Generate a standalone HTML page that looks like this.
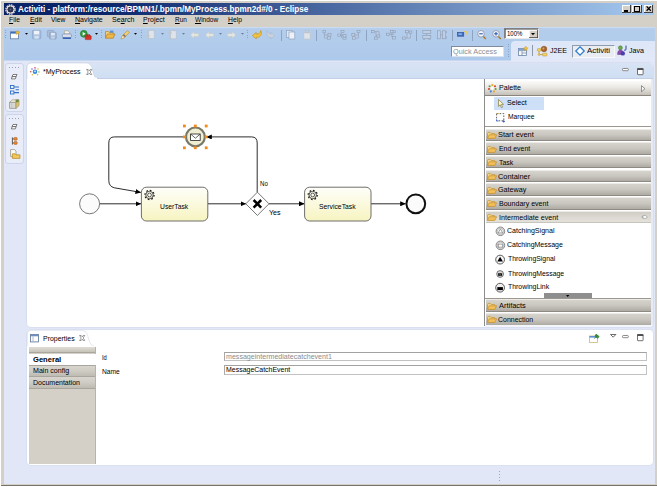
<!DOCTYPE html>
<html>
<head>
<meta charset="utf-8">
<title>Activiti - Eclipse</title>
<style>
html,body{margin:0;padding:0;}
body{width:657px;height:487px;position:relative;overflow:hidden;background:#fff;font-family:"Liberation Sans",sans-serif;font-size:8px;color:#000;}
.a{position:absolute;}
svg{position:absolute;overflow:visible;}
.t{position:absolute;white-space:nowrap;line-height:10px;height:10px;transform-origin:0 50%;}
u{text-decoration:underline;text-decoration-thickness:0.7px;text-underline-offset:0.6px;}
#win{left:1px;top:1px;width:656px;height:485px;background:#d4d0c8;border-bottom:1px solid #77746e;box-sizing:border-box;}
#title{left:4px;top:3.1px;width:650.3px;height:11.7px;background:linear-gradient(90deg,#0a246a 0%,#0a246a 15%,#a6caf0 100%);}
#menubar{left:4px;top:14.7px;width:650.8px;height:12.3px;background:#d4d0c8;}
#tool{left:4px;top:27px;width:650.8px;height:33.6px;background:linear-gradient(180deg,#d3e2f5 0,#b4cdec 1.6px,#adc9eb 100%);}
#work{left:4px;top:60.6px;width:650.8px;height:423.6px;background:#e2e7f7;}
.wb{position:absolute;top:4.7px;width:9.2px;height:8.6px;background:#d4d0c8;box-shadow:inset -1px -1px 0 #404040,inset 1px 1px 0 #fff;}
.drawer{position:absolute;left:485.5px;width:165.3px;height:12.6px;box-sizing:border-box;border-top:0.8px solid #ecebe7;border-bottom:0.9px solid #8f8b84;background:linear-gradient(180deg,#d6d3cc 0%,#c9c6bf 50%,#aeaba4 100%);}
.sep{position:absolute;width:1px;background:#8ea3c0;}
.dots{position:absolute;width:1px;height:10px;background:repeating-linear-gradient(180deg,#8ea3c0 0,#8ea3c0 1px,transparent 1px,transparent 2.4px);}
.fld{position:absolute;left:224px;width:423px;height:9.4px;background:#fff;box-sizing:border-box;border:1px solid #c2c2c2;border-top-color:#a2a2a2;border-left-color:#a8a8a8;}
</style>
</head>
<body>
<div id="win" class="a"></div>
<div id="title" class="a"></div>
<div id="menubar" class="a"></div>
<div id="tool" class="a"></div>
<div id="work" class="a"></div>
<svg style="left:5px;top:4px" width="11" height="11" viewBox="0 0 11 11">
<circle cx="5.5" cy="5.5" r="4.6" fill="#3a3f55" stroke="#e8e0e8" stroke-width="1.3" stroke-dasharray="1.6 0.8"/>
<circle cx="5.5" cy="5.5" r="3.6" fill="none" stroke="#f4f0f4" stroke-width="1"/>
<circle cx="5.5" cy="5.5" r="2.6" fill="#2a3048"/>
<circle cx="5.5" cy="5.5" r="1" fill="#566090"/>
</svg>
<div class="t" id="t0" style="left:17.60px;top:3.89px;font-size:8.40px;color:#fff;font-weight:bold;transform:scaleX(0.9734);">Activiti - platform:/resource/BPMN1/.bpmn/MyProcess.bpmn2d#/0 - Eclipse</div>
<div class="wb" style="left:622.2px;"></div>
<div class="a" style="left:624.4px;top:10.4px;width:4px;height:1.3px;background:#000;"></div>
<div class="wb" style="left:632.4px;"></div>
<div class="a" style="left:634.2px;top:6.2px;width:5.6px;height:5.4px;border:0.7px solid #000;border-top-width:1.5px;box-sizing:border-box;"></div>
<div class="wb" style="left:643.6px;"></div>
<svg style="left:645.6px;top:6.4px" width="6" height="6" viewBox="0 0 6 6"><path d="M0.6 0.4 L4.8 4.8 M4.8 0.4 L0.6 4.8" stroke="#000" stroke-width="1.3"/></svg>
<div class="t" id="t1" style="left:8.90px;top:15.40px;font-size:7.80px;color:#000;transform:scaleX(0.8666);"><u>F</u>ile</div>
<div class="t" id="t2" style="left:29.70px;top:15.40px;font-size:7.80px;color:#000;transform:scaleX(0.8846);"><u>E</u>dit</div>
<div class="t" id="t3" style="left:51.00px;top:15.40px;font-size:7.80px;color:#000;transform:scaleX(0.8529);">View</div>
<div class="t" id="t4" style="left:75.20px;top:15.40px;font-size:7.80px;color:#000;transform:scaleX(0.9027);"><u>N</u>avigate</div>
<div class="t" id="t5" style="left:111.90px;top:15.40px;font-size:7.80px;color:#000;transform:scaleX(0.9097);">Se<u>a</u>rch</div>
<div class="t" id="t6" style="left:142.90px;top:15.40px;font-size:7.80px;color:#000;transform:scaleX(0.8978);"><u>P</u>roject</div>
<div class="t" id="t7" style="left:174.60px;top:15.40px;font-size:7.80px;color:#000;transform:scaleX(0.8236);"><u>R</u>un</div>
<div class="t" id="t8" style="left:195.30px;top:15.40px;font-size:7.80px;color:#000;transform:scaleX(0.8365);"><u>W</u>indow</div>
<div class="t" id="t9" style="left:228.00px;top:15.40px;font-size:7.80px;color:#000;transform:scaleX(0.8662);"><u>H</u>elp</div>
<div class="a" style="left:510.8px;top:40.8px;width:144px;height:20px;border-radius:4px 0 0 0;background:linear-gradient(180deg,#dde7f7,#e2e8f7);"></div>
<div class="a" style="left:4px;top:59.8px;width:507px;height:0.9px;background:#c6d8f0;"></div>
<div class="dots" style="left:5.2px;top:30.0px;height:10.0px"></div>
<svg style="left:10.40px;top:30.00px" width="10.00" height="9.50" viewBox="0 0 10 9.5"><rect x="0.5" y="1.8" width="8" height="7" fill="#fdfdfd" stroke="#6e86ad" stroke-width="0.9"/><rect x="0.5" y="1.8" width="8" height="1.8" fill="#3a6ec0"/><path d="M7.6 0 L8.4 1.6 L10 2 L8.6 3 L9 4.6 L7.6 3.7 L6.2 4.6 L6.6 3 L5.2 2 L6.8 1.6Z" fill="#f3c13a" stroke="#b88a1a" stroke-width="0.3"/></svg>
<svg style="left:24.60px;top:33.30px" width="3.00" height="2.00" viewBox="0 0 3 2"><path d="M0 0H3L1.5 1.8Z" fill="#000"/></svg>
<svg style="left:32.30px;top:30.00px" width="9.20" height="9.20" viewBox="0 0 9.2 9.2"><rect x="0.4" y="0.4" width="8.4" height="8.4" rx="0.8" fill="#a9c0e0" stroke="#8aa6cc" stroke-width="0.8"/><rect x="2" y="0.8" width="5.2" height="3.6" fill="#eef3fa"/><rect x="2.4" y="5.8" width="4.4" height="3" fill="#d3dfef"/></svg>
<svg style="left:47.40px;top:30.00px" width="9.60" height="9.40" viewBox="0 0 9.6 9.4"><rect x="0.4" y="0.4" width="6.4" height="6.4" rx="0.8" fill="#a9bdd8" stroke="#8ea4c4" stroke-width="0.7"/><rect x="2.6" y="2.4" width="6.6" height="6.6" rx="0.8" fill="#a5b9d6" stroke="#879fc2" stroke-width="0.7"/><rect x="4" y="2.8" width="3.8" height="2.6" fill="#e3eaf5"/><rect x="4.2" y="6.4" width="3.4" height="2.4" fill="#c6d3e6"/></svg>
<svg style="left:62.30px;top:30.00px" width="9.80" height="9.40" viewBox="0 0 9.8 9.4"><path d="M2.4 4 V0.8 H6 L7.4 2.2 V4Z" fill="#f6f4ea" stroke="#9a9484" stroke-width="0.6"/><rect x="0.4" y="4" width="9" height="3.6" rx="0.8" fill="#d9dfea" stroke="#7d8fae" stroke-width="0.7"/><rect x="0.8" y="7.4" width="8.2" height="1.6" fill="#3a62b4"/></svg>
<div class="dots" style="left:75.4px;top:30.0px;height:10.0px"></div>
<svg style="left:80.00px;top:29.60px" width="11.40" height="10.00" viewBox="0 0 11.4 10"><circle cx="3.8" cy="3.8" r="3.5" fill="#2f9a3c" stroke="#1f7a2c" stroke-width="0.5"/><path d="M2.7 1.9 L5.6 3.8 L2.7 5.7Z" fill="#fff"/><rect x="5.2" y="5.6" width="6" height="4" rx="0.7" fill="#d8322a" stroke="#a81e18" stroke-width="0.5"/><rect x="7" y="4.6" width="2.4" height="1.4" fill="none" stroke="#a81e18" stroke-width="0.6"/></svg>
<svg style="left:94.60px;top:33.30px" width="3.00" height="2.00" viewBox="0 0 3 2"><path d="M0 0H3L1.5 1.8Z" fill="#000"/></svg>
<div class="dots" style="left:100.5px;top:30.0px;height:10.0px"></div>
<svg style="left:105.00px;top:30.40px" width="10.40" height="8.80" viewBox="0 0 10.4 8.8"><path d="M0.5 8.2 V1.6 H3.4 L4.2 2.6 H8.2 V4" fill="#f5d485" stroke="#b8862a" stroke-width="0.8"/><path d="M0.5 8.2 L2.4 4 H10 L8.2 8.2Z" fill="#f0b849" stroke="#b8862a" stroke-width="0.8"/><rect x="4.8" y="0.6" width="3.6" height="2" fill="#5d8fd6"/></svg>
<svg style="left:120.00px;top:30.00px" width="10.00" height="9.60" viewBox="0 0 10 9.6"><path d="M1 9 L2.4 5.8 L7.4 0.6 L9.4 2.4 L4.4 7.6Z" fill="#f2cf72" stroke="#b58a2c" stroke-width="0.6"/><path d="M3.4 4.8 L5.4 6.6" stroke="#6a6a6a" stroke-width="1.4"/><path d="M1 9 L2.4 5.8 L4.4 7.6Z" fill="#fff6d8" stroke="#b58a2c" stroke-width="0.4"/></svg>
<svg style="left:134.30px;top:33.30px" width="3.00" height="2.00" viewBox="0 0 3 2"><path d="M0 0H3L1.5 1.8Z" fill="#000"/></svg>
<div class="dots" style="left:140.7px;top:30.0px;height:10.0px"></div>
<svg style="left:145.50px;top:30.00px" width="8.60" height="9.60" viewBox="0 0 8.6 9.6"><rect x="2.6" y="0.4" width="5.6" height="8" fill="#dfe4ea" stroke="#b7bec8" stroke-width="0.6"/><path d="M2 1 V7 M0.4 5.4 L2 7.4 L3.6 5.4" fill="none" stroke="#c2c6cc" stroke-width="1.1"/></svg>
<svg style="left:160.60px;top:33.30px" width="3.00" height="2.00" viewBox="0 0 3 2"><path d="M0 0H3L1.5 1.8Z" fill="#6b7c93"/></svg>
<svg style="left:167.80px;top:30.00px" width="8.60" height="9.60" viewBox="0 0 8.6 9.6"><rect x="2.6" y="0.8" width="5.6" height="8" fill="#dfe4ea" stroke="#b7bec8" stroke-width="0.6"/><path d="M2 8 V2 M0.4 3.6 L2 1.6 L3.6 3.6" fill="none" stroke="#c2c6cc" stroke-width="1.1"/></svg>
<svg style="left:182.40px;top:33.30px" width="3.00" height="2.00" viewBox="0 0 3 2"><path d="M0 0H3L1.5 1.8Z" fill="#6b7c93"/></svg>
<svg style="left:189.60px;top:30.80px" width="9.20" height="8.00" viewBox="0 0 9.2 8"><path d="M0.4 4 L4 0.6 V2.6 H8.8 V5.4 H4 V7.4Z" fill="#e4e6e4" stroke="#c4c7c2" stroke-width="0.6"/></svg>
<svg style="left:204.70px;top:30.80px" width="9.20" height="8.00" viewBox="0 0 9.2 8"><path d="M0.4 4 L4 0.6 V2.6 H8.8 V5.4 H4 V7.4Z" fill="#e4e6e4" stroke="#c4c7c2" stroke-width="0.6"/></svg>
<svg style="left:219.30px;top:33.30px" width="3.00" height="2.00" viewBox="0 0 3 2"><path d="M0 0H3L1.5 1.8Z" fill="#6b7c93"/></svg>
<svg style="left:226.80px;top:30.80px" width="9.20" height="8.00" viewBox="0 0 9.2 8"><g transform="translate(9.2,0) scale(-1,1)"><path d="M0.4 4 L4 0.6 V2.6 H8.8 V5.4 H4 V7.4Z" fill="#e4e6e4" stroke="#c4c7c2" stroke-width="0.6"/></g></svg>
<svg style="left:241.00px;top:33.30px" width="3.00" height="2.00" viewBox="0 0 3 2"><path d="M0 0H3L1.5 1.8Z" fill="#6b7c93"/></svg>
<div class="dots" style="left:246.6px;top:30.0px;height:10.0px"></div>
<svg style="left:251.60px;top:30.00px" width="10.20" height="9.40" viewBox="0 0 10.2 9.4"><path d="M0.4 5.6 L4.2 2.4 V4.2 C7 4.2 8.4 3 8.8 0.6 C10.6 4.4 8.4 7.6 4.2 7.4 V9Z" fill="#f2c23c" stroke="#c08e1c" stroke-width="0.6"/></svg>
<svg style="left:266.20px;top:30.00px" width="8.60" height="9.40" viewBox="0 0 8.6 9.4"><g transform="translate(8.6,0) scale(-0.84,1)"><path d="M0.4 5.6 L4.2 2.4 V4.2 C7 4.2 8.4 3 8.8 0.6 C10.6 4.4 8.4 7.6 4.2 7.4 V9Z" fill="#ccd3dc" stroke="#aab4c2" stroke-width="0.6"/></g></svg>
<div class="sep" style="left:281.0px;top:29.5px;height:11.0px"></div>
<svg style="left:286.30px;top:30.00px" width="9.40" height="9.60" viewBox="0 0 9.4 9.6"><rect x="0.4" y="0.4" width="5.8" height="7" fill="#dfe7f1" stroke="#8fa4c2" stroke-width="0.7"/><rect x="3" y="2" width="5.8" height="7" fill="#eef2f8" stroke="#8fa4c2" stroke-width="0.7"/></svg>
<svg style="left:302.50px;top:30.00px" width="8.20" height="9.60" viewBox="0 0 8.2 9.6"><rect x="0.6" y="2.4" width="7" height="6.8" fill="#d5dbe3" stroke="#bcc4cf" stroke-width="0.6"/><rect x="2.4" y="0.6" width="3.4" height="2.2" fill="#c9d0da" stroke="#b2bbc8" stroke-width="0.5"/><path d="M3 4 V8 M5.2 4 V8" stroke="#eef1f5" stroke-width="0.9"/></svg>
<div class="sep" style="left:315.6px;top:29.5px;height:11.0px"></div>
<svg style="left:321.80px;top:30.00px" width="10.00" height="10.00" viewBox="0 0 10 10"><g fill="#bdd0e8" stroke="#8d9bb0" stroke-width="0.6"><rect x="1" y="0.6" width="2.6" height="2.2"/><rect x="6" y="3.6" width="3" height="2.4"/><rect x="5.4" y="6.8" width="3" height="2.4"/><path d="M2.4 3 V8 H5 M2.4 5 H6"/></g></svg>
<svg style="left:336.50px;top:30.00px" width="10.00" height="10.00" viewBox="0 0 10 10"><g fill="#bdd0e8" stroke="#8d9bb0" stroke-width="0.6"><rect x="4" y="0.4" width="3" height="2.2"/><rect x="0.8" y="4" width="2.6" height="2.2"/><rect x="6" y="4.6" width="3" height="2.4"/><rect x="6" y="7.2" width="3" height="2"/><path d="M4.6 2.8 V8 M3 5.4 H6"/></g></svg>
<svg style="left:351.00px;top:30.00px" width="10.00" height="10.00" viewBox="0 0 10 10"><g fill="#bdd0e8" stroke="#8d9bb0" stroke-width="0.6"><rect x="6" y="0.4" width="3" height="2.2"/><rect x="0.8" y="3.6" width="3" height="2.4"/><rect x="1.4" y="6.8" width="3" height="2.4"/><path d="M7.4 2.8 V8 H4.6 M7.4 5 H4"/></g></svg>
<div class="sep" style="left:365.7px;top:29.5px;height:11.0px"></div>
<svg style="left:371.20px;top:30.00px" width="10.00" height="10.00" viewBox="0 0 10 10"><g fill="#bdd0e8" stroke="#8d9bb0" stroke-width="0.6"><rect x="0.6" y="0.6" width="2.6" height="2.2"/><rect x="5.8" y="5" width="3" height="2.2"/><rect x="3.6" y="7" width="2.6" height="2.2"/><path d="M3.4 1.6 H8 V5 M5 1.6 V7"/></g></svg>
<svg style="left:386.30px;top:30.00px" width="10.00" height="10.00" viewBox="0 0 10 10"><g fill="#bdd0e8" stroke="#8d9bb0" stroke-width="0.6"><rect x="0.6" y="3.2" width="2.6" height="2.2"/><rect x="4.6" y="0.6" width="2.6" height="2.2"/><rect x="7" y="0.8" width="2.4" height="2"/><rect x="6.4" y="6.6" width="3" height="2.4"/><path d="M3.4 4.4 H8 M5.8 3 V7"/></g></svg>
<svg style="left:401.60px;top:30.00px" width="10.00" height="10.00" viewBox="0 0 10 10"><g fill="#bdd0e8" stroke="#8d9bb0" stroke-width="0.6"><rect x="0.6" y="7" width="2.6" height="2.2"/><rect x="3.6" y="0.6" width="2.8" height="2.2"/><rect x="7.2" y="1" width="2.6" height="2.2"/><path d="M3.4 8 H8.4 V3.4 M5 3 V8"/></g></svg>
<div class="sep" style="left:416.2px;top:29.5px;height:11.0px"></div>
<svg style="left:421.80px;top:30.00px" width="10.00" height="10.00" viewBox="0 0 10 10"><g fill="#bdd0e8" stroke="#8d9bb0" stroke-width="0.6"><rect x="0.8" y="0.6" width="8" height="3"/><rect x="0.8" y="5.6" width="8" height="3"/><path d="M4.8 3.6 V5.6 M1 9.4 H3 M6.4 9.4 H8.6"/></g></svg>
<svg style="left:436.50px;top:30.00px" width="10.00" height="10.00" viewBox="0 0 10 10"><g fill="#bdd0e8" stroke="#8d9bb0" stroke-width="0.6"><rect x="0.6" y="0.8" width="3" height="8"/><rect x="5.6" y="0.8" width="3" height="8"/><path d="M3.6 4.8 H5.6 M9.4 1 V3 M9.4 6.4 V8.6"/></g></svg>
<div class="sep" style="left:451.6px;top:29.5px;height:11.0px"></div>
<svg style="left:457.00px;top:31.40px" width="10.00" height="6.00" viewBox="0 0 10 6"><rect x="0.4" y="1.4" width="6.4" height="3.8" fill="#3f6fc4" stroke="#2c4f96" stroke-width="0.6"/><rect x="1.4" y="2.4" width="3.4" height="1.4" fill="#9fc0ee"/><path d="M6 0.4 H9.4 V3.4" fill="none" stroke="#e8c85a" stroke-width="1"/></svg>
<div class="sep" style="left:471.7px;top:29.5px;height:11.0px"></div>
<svg style="left:477.40px;top:29.60px" width="9.40" height="9.60" viewBox="0 0 9.4 9.6"><circle cx="4" cy="3.8" r="3.3" fill="#f4f7fb" stroke="#8c98ab" stroke-width="0.9"/><path d="M6.4 6.4 L8.8 9" stroke="#b07a2a" stroke-width="1.5"/><path d="M2.2 3.8 H5.8" stroke="#2b57b0" stroke-width="1.1"/></svg>
<svg style="left:492.00px;top:29.60px" width="9.40" height="9.60" viewBox="0 0 9.4 9.6"><circle cx="4" cy="3.8" r="3.3" fill="#f4f7fb" stroke="#8c98ab" stroke-width="0.9"/><path d="M6.4 6.4 L8.8 9" stroke="#b07a2a" stroke-width="1.5"/><path d="M2.2 3.8 H5.8" stroke="#2b57b0" stroke-width="1.1"/><path d="M4 2 V5.6" stroke="#2b57b0" stroke-width="1.1"/></svg>
<div class="a" style="left:504.3px;top:28.3px;width:34.4px;height:11px;background:#fff;box-sizing:border-box;border:1px solid #808080;border-right-color:#e8e8e8;border-bottom-color:#e8e8e8;box-shadow:inset 0.6px 0.6px 0 #404040;"></div>
<div class="a" style="left:529px;top:29.6px;width:8.6px;height:8.6px;background:#d4d0c8;box-shadow:inset -0.8px -0.8px 0 #404040,inset 0.8px 0.8px 0 #fff;"></div>
<svg style="left:531.20px;top:33.00px" width="4.00" height="2.40" viewBox="0 0 4 2.4"><path d="M0 0H4L2 2.2Z" fill="#000"/></svg>
<div class="t" id="t10" style="left:507.20px;top:29.04px;font-size:7.40px;color:#000;transform:scaleX(0.8093);">100%</div>
<div class="a" style="left:450.8px;top:45.8px;width:52.8px;height:11px;background:#fff;box-sizing:border-box;border:1px solid #7f8a9c;border-right-color:#d9e2ee;border-bottom-color:#d9e2ee;"></div>
<div class="t" id="t11" style="left:453.20px;top:46.50px;font-size:7.80px;color:#8a8f96;transform:scaleX(0.9360);">Quick Access</div>
<div class="dots" style="left:508.4px;top:44.0px;height:14.0px"></div>
<svg style="left:518.00px;top:45.60px" width="10.40" height="10.40" viewBox="0 0 10.4 10.4"><rect x="0.6" y="2.6" width="7.8" height="7" fill="#f4f6f8" stroke="#6f86a8" stroke-width="0.8"/><path d="M0.6 4.6 H8.4 M4 4.6 V9.6 M4 7 H8.4" stroke="#6f86a8" stroke-width="0.7"/><rect x="0.6" y="2.6" width="7.8" height="1.6" fill="#7fa0d0"/><path d="M7.8 0 L8.6 1.6 L10.2 2 L8.8 3 L9.2 4.6 L7.8 3.7 L6.4 4.6 L6.8 3 L5.4 2 L7 1.6Z" fill="#f3c13a" stroke="#b88a1a" stroke-width="0.3"/></svg>
<div class="a" style="left:532px;top:45.4px;width:1px;height:11px;background:#8d97a6;"></div>
<svg style="left:537.00px;top:45.60px" width="11.00" height="10.60" viewBox="0 0 11 10.6"><circle cx="7" cy="3" r="2.8" fill="#a9652c" stroke="#7c4417" stroke-width="0.5"/><circle cx="6.4" cy="2.4" r="1" fill="#e0a66a"/><rect x="0.4" y="2.6" width="3.4" height="2.6" rx="0.6" fill="#f4d26a" stroke="#b78f26" stroke-width="0.5"/><rect x="5.6" y="7.2" width="4.4" height="2.8" rx="0.6" fill="#f4d26a" stroke="#b78f26" stroke-width="0.5"/><path d="M2 5.4 V8.6 H5.4" fill="none" stroke="#b78f26" stroke-width="0.8"/><circle cx="2" cy="8.6" r="1" fill="#f4d26a" stroke="#b78f26" stroke-width="0.4"/></svg>
<div class="t" id="t12" style="left:550.30px;top:46.30px;font-size:7.80px;color:#000;transform:scaleX(0.9066);">J2EE</div>
<div class="a" style="left:572px;top:44.6px;width:42.6px;height:13.4px;box-sizing:border-box;background:#e9edf2;border:1px solid #f8fafc;border-top-color:#8f9cb0;border-left-color:#8f9cb0;"></div>
<svg style="left:575.20px;top:46.40px" width="10.00" height="10.00" viewBox="0 0 10 10"><path d="M5 0.8 L9.2 5 L5 9.2 L0.8 5Z" fill="#fff" stroke="#2f7fd0" stroke-width="1.3"/></svg>
<div class="t" id="t13" style="left:587.30px;top:46.30px;font-size:7.80px;color:#000;transform:scaleX(1.0208);">Activiti</div>
<svg style="left:616.60px;top:45.40px" width="10.60" height="11.00" viewBox="0 0 10.6 11"><circle cx="3.4" cy="2.8" r="2" fill="#6aa84a" stroke="#3f7a2a" stroke-width="0.5"/><path d="M0.6 9.4 C0.6 6 2 5 3.6 5 C5.2 5 6.4 6 6.4 9.4Z" fill="#8a4fb0" stroke="#5e2f82" stroke-width="0.5"/><circle cx="5.8" cy="8.4" r="2.2" fill="#4a3fa8"/><path d="M9 0.6 V4.2 C9 5.4 7.6 5.6 7 4.8" fill="none" stroke="#2a3f9a" stroke-width="1"/></svg>
<div class="t" id="t14" style="left:629.30px;top:46.30px;font-size:7.80px;color:#000;transform:scaleX(0.9039);">Java</div>
<div class="a" style="left:5px;top:63.4px;width:18.7px;height:49.0px;box-sizing:border-box;border:1px solid #cdd5ea;border-radius:3px;background:#e9edf9;"></div>
<div class="a" style="left:5px;top:114.2px;width:18.7px;height:49.6px;box-sizing:border-box;border:1px solid #cdd5ea;border-radius:3px;background:#e9edf9;"></div>
<div class="a" style="left:9.4px;top:67.0px;width:10px;height:1px;background:repeating-linear-gradient(90deg,#9aa4b8 0,#9aa4b8 1px,transparent 1px,transparent 2.9px);"></div>
<svg style="left:11.20px;top:74.00px" width="6.40" height="5.40" viewBox="0 0 6.4 5.4"><path d="M2 0.5 H6 L5 2.6 H1Z" fill="#fff" stroke="#4a4a4a" stroke-width="0.7"/><path d="M1.2 2.6 H5.2 L4.2 4.9 H0.4Z" fill="#fff" stroke="#4a4a4a" stroke-width="0.7"/></svg>
<svg style="left:9.50px;top:85.30px" width="9.40" height="9.80" viewBox="0 0 9.4 9.8"><rect x="0.5" y="0.5" width="3.4" height="3" fill="#e8f0fb" stroke="#2f6fc6" stroke-width="0.9"/><rect x="0.5" y="6" width="3.4" height="3" fill="#e8f0fb" stroke="#2f6fc6" stroke-width="0.9"/><path d="M4 2 H9 M4 7.6 H9 M5.6 4.8 H9" stroke="#2f6fc6" stroke-width="1.1"/></svg>
<svg style="left:9.00px;top:98.80px" width="11.00" height="10.00" viewBox="0 0 11 10"><path d="M0.5 3.4 H7 V9.4 H0.5Z" fill="#d9d9d4" stroke="#8d8d86" stroke-width="0.7"/><path d="M0.5 3.4 L3.4 0.8 H10 L7 3.4Z" fill="#efe9c8" stroke="#8d8d86" stroke-width="0.6"/><path d="M7 3.4 L10 0.8 V6.6 L7 9.4Z" fill="#e2c35e" stroke="#8d8d86" stroke-width="0.6"/><rect x="6.6" y="0.6" width="3" height="2.6" fill="#6d8a3a"/><path d="M2.8 3.6 V9.2" stroke="#b4b4ae" stroke-width="0.6"/></svg>
<div class="a" style="left:9.4px;top:117.8px;width:10px;height:1px;background:repeating-linear-gradient(90deg,#9aa4b8 0,#9aa4b8 1px,transparent 1px,transparent 2.9px);"></div>
<svg style="left:11.20px;top:124.30px" width="6.40" height="5.40" viewBox="0 0 6.4 5.4"><path d="M2 0.5 H6 L5 2.6 H1Z" fill="#fff" stroke="#4a4a4a" stroke-width="0.7"/><path d="M1.2 2.6 H5.2 L4.2 4.9 H0.4Z" fill="#fff" stroke="#4a4a4a" stroke-width="0.7"/></svg>
<svg style="left:10.80px;top:136.70px" width="7.00" height="8.00" viewBox="0 0 7 8"><path d="M1.4 0.4 V7.6" stroke="#4c4c4c" stroke-width="0.9"/><rect x="2.8" y="0.4" width="3.4" height="2.8" rx="1" fill="#e0883a" stroke="#a65618" stroke-width="0.5"/><rect x="2.8" y="4.6" width="3.4" height="2.8" rx="1" fill="#e0883a" stroke="#a65618" stroke-width="0.5"/><path d="M1.4 1.8 H2.8 M1.4 6 H2.8" stroke="#4c4c4c" stroke-width="0.7"/></svg>
<svg style="left:9.50px;top:149.20px" width="10.60" height="10.00" viewBox="0 0 10.6 10"><path d="M0.6 0.6 H4.6 L6 2 V7.4 H0.6Z" fill="#fafaf4" stroke="#8a8a7a" stroke-width="0.7"/><path d="M2.4 9.4 V4.8 H5.2 L6 5.8 H10 V9.4Z" fill="#f1c65a" stroke="#b48a22" stroke-width="0.7"/></svg>
<div class="a" style="left:27px;top:63.4px;width:625.6px;height:263.2px;border-radius:4px 4px 4px 4px;background:#fff;overflow:hidden;box-shadow:0 0 0 0.6px #cfd8ea;"><div class="a" style="left:0;top:0;width:100%;height:15px;background:linear-gradient(180deg,#d8e4f5,#cfdef2);"></div><div class="a" style="left:0;top:14.6px;width:100%;height:0.8px;background:#c2d0e6;"></div></div>
<svg style="left:27.00px;top:63.40px" width="75.00" height="15.40" viewBox="0 0 75 15.4"><path d="M0 15.4 V4 Q0 0 4 0 H60 Q63.6 0.4 64.8 4 L66.8 11.6 Q67.8 15 70.4 15.4 Z" fill="#fff" stroke="#c5d0e4" stroke-width="0.6"/><rect x="0.4" y="14.6" width="69.6" height="1.4" fill="#fff"/></svg>
<svg style="left:29.80px;top:67.00px" width="9.80" height="9.40" viewBox="0 0 9.8 9.4"><circle cx="5" cy="4.7" r="2.3" fill="#3a8ae0"/><circle cx="5" cy="4.3" r="0.9" fill="#d6eafc"/><circle cx="5" cy="0.9" r="0.8" fill="#d24a8a"/><circle cx="8" cy="2" r="0.8" fill="#e6b23a"/><circle cx="9" cy="4.9" r="0.7" fill="#6fae3a"/><circle cx="7.6" cy="7.8" r="0.8" fill="#e6b23a"/><circle cx="2.4" cy="7.8" r="0.8" fill="#e6b23a"/><circle cx="0.8" cy="4.7" r="0.8" fill="#d2442a"/><circle cx="2" cy="2" r="0.8" fill="#8a5ac8"/></svg>
<div class="t" id="t15" style="left:42.60px;top:66.96px;font-size:7.90px;color:#000;transform:scaleX(0.8932);">*MyProcess</div>
<svg style="left:85.60px;top:69.00px" width="6.40" height="6.00" viewBox="0 0 6.4 6"><path d="M0.6 0.5 H2.2 L3.2 1.9 L4.2 0.5 H5.8 L4.2 3 L5.8 5.5 H4.2 L3.2 4.1 L2.2 5.5 H0.6 L2.2 3Z" fill="#fff" stroke="#5a5a5a" stroke-width="0.6"/></svg>
<svg style="left:622.40px;top:68.30px" width="6.80" height="3.20" viewBox="0 0 6.8 3.2"><rect x="0.5" y="0.5" width="5.8" height="2.2" rx="0.7" fill="#fff" stroke="#6e6e6e" stroke-width="0.8"/></svg>
<svg style="left:637.00px;top:68.00px" width="6.80" height="7.20" viewBox="0 0 6.8 7.2"><rect x="0.5" y="0.5" width="5.6" height="6.2" rx="0.5" fill="#fff" stroke="#4e4e4e" stroke-width="0.8"/><rect x="0.3" y="0.2" width="6" height="1.8" fill="#4e4e4e"/></svg>
<svg style="left:0;top:0" width="657" height="487" viewBox="0 0 657 487"><defs><linearGradient id="tg" x1="0" y1="0" x2="0" y2="1"><stop offset="0" stop-color="#fefefa"/><stop offset="1" stop-color="#f7f4c0"/></linearGradient><marker id="ah" markerWidth="6" markerHeight="5" refX="5.4" refY="2.5" orient="auto" markerUnits="userSpaceOnUse"><path d="M0 0 L5.6 2.5 L0 5Z" fill="#000"/></marker></defs><g fill="none" stroke="#151515" stroke-width="0.9" marker-end="url(#ah)"><path d="M99.6 203.8 H141"/><path d="M208 203.8 H246"/><path d="M269 203.8 H304.4"/><path d="M370.8 203.8 H405.6"/><path d="M257.2 192.4 V143 Q257.2 136.9 251.6 136.9 H206.4"/><path d="M184.6 136.9 H114.4 Q108.8 136.9 108.8 143 V180.5 Q108.8 186.5 114.4 187.8 L140.8 192.4"/></g><circle cx="89.6" cy="203.8" r="10" fill="#fbfbfb" stroke="#555" stroke-width="0.8"/><rect x="141.4" y="187.2" width="66.4" height="33.8" rx="5" fill="url(#tg)" stroke="#5e5e5e" stroke-width="0.9"/><g transform="translate(149.5,195)" fill="none" stroke="#1c1c1c"><circle r="4.6" stroke-width="1.2" stroke-dasharray="1.7 1.873"/><circle r="3.7" stroke-width="0.75"/><circle r="1.9" stroke-width="0.7"/></g><rect x="304.6" y="187.2" width="66.4" height="33.8" rx="5" fill="url(#tg)" stroke="#5e5e5e" stroke-width="0.9"/><g transform="translate(312.7,195)" fill="none" stroke="#1c1c1c"><circle r="4.6" stroke-width="1.2" stroke-dasharray="1.7 1.873"/><circle r="3.7" stroke-width="0.75"/><circle r="1.9" stroke-width="0.7"/></g><path d="M257.4 192.2 L269 203.8 L257.4 215.4 L245.8 203.8Z" fill="#fff" stroke="#555" stroke-width="0.8"/><path d="M253.6 200 L261.2 207.6 M261.2 200 L253.6 207.6" stroke="#000" stroke-width="2.5"/><circle cx="415.8" cy="203.8" r="9.4" fill="#fbfbfb" stroke="#111" stroke-width="2"/><circle cx="195.4" cy="136.9" r="9.4" fill="#efedd2" stroke="#77776a" stroke-width="2.2"/><rect x="190.6" y="134" width="9.6" height="6.4" fill="#fff" stroke="#222" stroke-width="0.8"/><path d="M190.8 134.2 L195.4 138.2 L200 134.2" fill="none" stroke="#222" stroke-width="0.7"/><rect x="183.0" y="124.6" width="2.8" height="2.8" fill="#f28a18"/><rect x="183.0" y="135.5" width="2.8" height="2.8" fill="#f28a18"/><rect x="183.0" y="146.4" width="2.8" height="2.8" fill="#f28a18"/><rect x="193.9" y="124.6" width="2.8" height="2.8" fill="#f28a18"/><rect x="193.9" y="146.4" width="2.8" height="2.8" fill="#f28a18"/><rect x="204.8" y="124.6" width="2.8" height="2.8" fill="#f28a18"/><rect x="204.8" y="135.5" width="2.8" height="2.8" fill="#f28a18"/><rect x="204.8" y="146.4" width="2.8" height="2.8" fill="#f28a18"/></svg>
<div class="t" id="t16" style="left:160.40px;top:202.08px;font-size:6.70px;color:#000;transform:scaleX(1.0117);">UserTask</div>
<div class="t" id="t17" style="left:319.00px;top:202.08px;font-size:6.70px;color:#000;transform:scaleX(1.0149);">ServiceTask</div>
<div class="t" id="t18" style="left:260.40px;top:178.82px;font-size:6.30px;color:#000;transform:scaleX(0.9674);">No</div>
<div class="t" id="t19" style="left:269.40px;top:208.22px;font-size:6.30px;color:#000;transform:scaleX(1.1283);">Yes</div>
<div class="a" style="left:484.2px;top:79px;width:1.2px;height:247px;background:#8c8c8c;"></div>
<div class="a" style="left:485.4px;top:79px;width:165.6px;height:246px;background:#fff;"></div>
<div class="a" style="left:651px;top:79px;width:1.6px;height:246px;background:#e4eaf6;"></div>
<div class="a" style="left:485.4px;top:81.4px;width:165.6px;height:14.5px;box-sizing:border-box;border-bottom:1px solid #8a867e;background:linear-gradient(180deg,#fbfbfa 0%,#ebe9e4 45%,#c4c0b8 100%);"></div>
<svg style="left:488.40px;top:84.00px" width="8.60" height="8.60" viewBox="0 0 8.6 8.6"><g><circle cx="4.3" cy="1.1" r="1.05" fill="#e6a82a"/><circle cx="7" cy="2.2" r="1.05" fill="#d2442a"/><circle cx="7.6" cy="5" r="1.05" fill="#5aa03a"/><circle cx="6" cy="7.4" r="1.05" fill="#e6a82a"/><circle cx="2.8" cy="7.4" r="1.05" fill="#3f7fd8"/><circle cx="1" cy="5" r="1.05" fill="#d2442a"/><circle cx="1.6" cy="2.2" r="1.05" fill="#5aa03a"/><circle cx="4.3" cy="4.4" r="1.4" fill="#fff"/></g></svg>
<div class="t" id="t20" style="left:499.20px;top:83.39px;font-size:8.10px;color:#000;transform:scaleX(0.8729);">Palette</div>
<svg style="left:640.60px;top:85.00px" width="4.60" height="7.40" viewBox="0 0 4.6 7.4"><path d="M0.5 0.6 L4 3.7 L0.5 6.8Z" fill="#f4f4f2" stroke="#6a6a6a" stroke-width="0.7"/></svg>
<div class="a" style="left:494.2px;top:97.2px;width:49.8px;height:12.6px;background:#cde0f7;"></div>
<svg style="left:498.00px;top:99.00px" width="6.00" height="9.60" viewBox="0 0 6 9.6"><path d="M0.5 0.5 V7.4 L2.2 5.8 L3.4 8.8 L4.6 8.2 L3.4 5.4 H5.6Z" fill="#fdf7d8" stroke="#8a7a3a" stroke-width="0.7"/></svg>
<div class="t" id="t21" style="left:507.00px;top:97.79px;font-size:8.10px;color:#000;transform:scaleX(0.8800);">Select</div>
<svg style="left:496.30px;top:113.30px" width="9.00" height="9.40" viewBox="0 0 9 9.4"><rect x="0.6" y="0.6" width="7.2" height="7.2" fill="none" stroke="#3a3a3a" stroke-width="0.8" stroke-dasharray="1.6 1.4"/><path d="M0.6 0.6 H3" stroke="#c8a83a" stroke-width="0.8"/><path d="M6.4 8.4 H9 M7.7 7.2 V9.6" stroke="#2a4aa8" stroke-width="0.8"/><path d="M0.6 6.4 V8 H2.4" stroke="#3f6fd0" stroke-width="0.9" fill="none"/></svg>
<div class="t" id="t22" style="left:508.00px;top:112.29px;font-size:8.10px;color:#000;transform:scaleX(0.8262);">Marquee</div>
<div class="a" style="left:485.4px;top:126.2px;width:165.6px;height:1px;background:#9c9890;"></div>
<div class="drawer" style="top:128.5px;"></div>
<svg style="left:486.80px;top:131.80px" width="10.00" height="7.00" viewBox="0 0 10 7"><path d="M0.5 6.4 V1.4 Q0.5 0.6 1.4 0.6 H3.4 L4.4 1.6 H7.6 V2.8" fill="#f6d68a" stroke="#c08c2c" stroke-width="0.7"/><path d="M0.5 6.4 L2.2 2.8 H9.6 L7.8 6.4Z" fill="#f4c05a" stroke="#c08c2c" stroke-width="0.7"/></svg>
<div class="t" id="t23" style="left:498.00px;top:130.46px;font-size:7.90px;color:#000;transform:scaleX(0.9352);">Start event</div>
<div class="drawer" style="top:142.2px;"></div>
<svg style="left:486.80px;top:145.52px" width="10.00" height="7.00" viewBox="0 0 10 7"><path d="M0.5 6.4 V1.4 Q0.5 0.6 1.4 0.6 H3.4 L4.4 1.6 H7.6 V2.8" fill="#f6d68a" stroke="#c08c2c" stroke-width="0.7"/><path d="M0.5 6.4 L2.2 2.8 H9.6 L7.8 6.4Z" fill="#f4c05a" stroke="#c08c2c" stroke-width="0.7"/></svg>
<div class="t" id="t24" style="left:498.80px;top:144.18px;font-size:7.90px;color:#000;transform:scaleX(0.8777);">End event</div>
<div class="drawer" style="top:155.9px;"></div>
<svg style="left:486.80px;top:159.24px" width="10.00" height="7.00" viewBox="0 0 10 7"><path d="M0.5 6.4 V1.4 Q0.5 0.6 1.4 0.6 H3.4 L4.4 1.6 H7.6 V2.8" fill="#f6d68a" stroke="#c08c2c" stroke-width="0.7"/><path d="M0.5 6.4 L2.2 2.8 H9.6 L7.8 6.4Z" fill="#f4c05a" stroke="#c08c2c" stroke-width="0.7"/></svg>
<div class="t" id="t25" style="left:498.80px;top:157.90px;font-size:7.90px;color:#000;transform:scaleX(0.8808);">Task</div>
<div class="drawer" style="top:169.7px;"></div>
<svg style="left:486.80px;top:172.96px" width="10.00" height="7.00" viewBox="0 0 10 7"><path d="M0.5 6.4 V1.4 Q0.5 0.6 1.4 0.6 H3.4 L4.4 1.6 H7.6 V2.8" fill="#f6d68a" stroke="#c08c2c" stroke-width="0.7"/><path d="M0.5 6.4 L2.2 2.8 H9.6 L7.8 6.4Z" fill="#f4c05a" stroke="#c08c2c" stroke-width="0.7"/></svg>
<div class="t" id="t26" style="left:498.40px;top:171.62px;font-size:7.90px;color:#000;transform:scaleX(0.9410);">Container</div>
<div class="drawer" style="top:183.4px;"></div>
<svg style="left:486.80px;top:186.68px" width="10.00" height="7.00" viewBox="0 0 10 7"><path d="M0.5 6.4 V1.4 Q0.5 0.6 1.4 0.6 H3.4 L4.4 1.6 H7.6 V2.8" fill="#f6d68a" stroke="#c08c2c" stroke-width="0.7"/><path d="M0.5 6.4 L2.2 2.8 H9.6 L7.8 6.4Z" fill="#f4c05a" stroke="#c08c2c" stroke-width="0.7"/></svg>
<div class="t" id="t27" style="left:498.40px;top:185.34px;font-size:7.90px;color:#000;transform:scaleX(0.9056);">Gateway</div>
<div class="drawer" style="top:197.1px;"></div>
<svg style="left:486.80px;top:200.40px" width="10.00" height="7.00" viewBox="0 0 10 7"><path d="M0.5 6.4 V1.4 Q0.5 0.6 1.4 0.6 H3.4 L4.4 1.6 H7.6 V2.8" fill="#f6d68a" stroke="#c08c2c" stroke-width="0.7"/><path d="M0.5 6.4 L2.2 2.8 H9.6 L7.8 6.4Z" fill="#f4c05a" stroke="#c08c2c" stroke-width="0.7"/></svg>
<div class="t" id="t28" style="left:498.80px;top:199.06px;font-size:7.90px;color:#000;transform:scaleX(0.8936);">Boundary event</div>
<div class="drawer" style="top:210.8px;background:linear-gradient(180deg,#cfccc5 0%,#dedbd4 60%,#e4e1da 100%);border-bottom-color:#c8c5be;"></div>
<svg style="left:486.80px;top:214.12px" width="10.00" height="7.00" viewBox="0 0 10 7"><path d="M0.5 6.4 V1.4 Q0.5 0.6 1.4 0.6 H3.4 L4.4 1.6 H7.6 V2.8" fill="#f6d68a" stroke="#c08c2c" stroke-width="0.7"/><path d="M0.5 6.4 L2.2 2.8 H9.6 L7.8 6.4Z" fill="#f4c05a" stroke="#c08c2c" stroke-width="0.7"/></svg>
<div class="t" id="t29" style="left:498.50px;top:212.78px;font-size:7.90px;color:#000;transform:scaleX(0.9058);">Intermediate event</div>
<svg style="left:641.20px;top:214.60px" width="6.40" height="4.00" viewBox="0 0 6.4 4"><path d="M0.4 2 H2 M2 0.6 H4.6 Q6 0.6 6 2 Q6 3.4 4.6 3.4 H2Z" fill="#fff" stroke="#8a8a8a" stroke-width="0.6"/></svg>
<svg style="left:0;top:0" width="657" height="487" viewBox="0 0 657 487"><g transform="translate(500.4,231.3)"><circle r="4.3" fill="#f4f4f4" stroke="#6a6a6a" stroke-width="0.8"/><circle r="3.2" fill="none" stroke="#8a8a8a" stroke-width="0.5"/><path d="M0 -2.4 L2.2 1.6 H-2.2Z" fill="#fff" stroke="#6a6a6a" stroke-width="0.6"/></g></svg>
<div class="t" id="t30" style="left:507.00px;top:225.59px;font-size:8.10px;color:#000;transform:scaleX(0.8723);">CatchingSignal</div>
<svg style="left:0;top:0" width="657" height="487" viewBox="0 0 657 487"><g transform="translate(500.4,245.3)"><circle r="4.3" fill="#f4f4f4" stroke="#6a6a6a" stroke-width="0.8"/><circle r="3.2" fill="none" stroke="#8a8a8a" stroke-width="0.5"/><rect x="-2.2" y="-1.2" width="4.4" height="3" fill="#fff" stroke="#6a6a6a" stroke-width="0.6"/></g></svg>
<div class="t" id="t31" style="left:507.00px;top:240.19px;font-size:8.10px;color:#000;transform:scaleX(0.8627);">CatchingMessage</div>
<svg style="left:0;top:0" width="657" height="487" viewBox="0 0 657 487"><g transform="translate(500.1,259.6)"><circle r="4.4" fill="#f6f6f6" stroke="#4a4a4a" stroke-width="0.9"/><path d="M0 -2.8 L2.8 2 H-2.8Z" fill="#000"/></g></svg>
<div class="t" id="t32" style="left:507.70px;top:254.49px;font-size:8.10px;color:#000;transform:scaleX(0.8477);">ThrowingSignal</div>
<svg style="left:0;top:0" width="657" height="487" viewBox="0 0 657 487"><g transform="translate(500.1,274.0)"><circle r="3.4" fill="#d8d8d8" stroke="#5a5a5a" stroke-width="0.8"/><rect x="-2" y="-1" width="4" height="2.8" fill="#111"/><path d="M-1.6 -0.8 L0 0.4 L1.6 -0.8" stroke="#ddd" stroke-width="0.5" fill="none"/></g></svg>
<div class="t" id="t33" style="left:507.70px;top:268.89px;font-size:8.10px;color:#000;transform:scaleX(0.8482);">ThrowingMessage</div>
<svg style="left:0;top:0" width="657" height="487" viewBox="0 0 657 487"><g transform="translate(500.1,287.7)"><circle r="4.4" fill="#f0f0f0" stroke="#4a4a4a" stroke-width="0.9"/><rect x="-2.8" y="-0.6" width="5.6" height="3" fill="#000"/></g></svg>
<div class="t" id="t34" style="left:507.70px;top:281.79px;font-size:8.10px;color:#000;transform:scaleX(0.8537);">ThrowingLink</div>
<div class="a" style="left:544px;top:293.4px;width:47.6px;height:4.6px;background:#8e8e8e;"></div>
<svg style="left:566.00px;top:294.60px" width="3.40" height="2.20" viewBox="0 0 3.4 2.2"><path d="M0 0H3.4L1.7 2Z" fill="#000"/></svg>
<div class="a" style="left:485.4px;top:297.8px;width:165.6px;height:1px;background:#9c9890;"></div>
<div class="drawer" style="top:299.4px;"></div>
<svg style="left:486.80px;top:302.70px" width="10.00" height="7.00" viewBox="0 0 10 7"><path d="M0.5 6.4 V1.4 Q0.5 0.6 1.4 0.6 H3.4 L4.4 1.6 H7.6 V2.8" fill="#f6d68a" stroke="#c08c2c" stroke-width="0.7"/><path d="M0.5 6.4 L2.2 2.8 H9.6 L7.8 6.4Z" fill="#f4c05a" stroke="#c08c2c" stroke-width="0.7"/></svg>
<div class="t" id="t35" style="left:498.60px;top:301.36px;font-size:7.90px;color:#000;transform:scaleX(0.9404);">Artifacts</div>
<div class="drawer" style="top:313.0px;"></div>
<svg style="left:486.80px;top:316.30px" width="10.00" height="7.00" viewBox="0 0 10 7"><path d="M0.5 6.4 V1.4 Q0.5 0.6 1.4 0.6 H3.4 L4.4 1.6 H7.6 V2.8" fill="#f6d68a" stroke="#c08c2c" stroke-width="0.7"/><path d="M0.5 6.4 L2.2 2.8 H9.6 L7.8 6.4Z" fill="#f4c05a" stroke="#c08c2c" stroke-width="0.7"/></svg>
<div class="t" id="t36" style="left:498.40px;top:314.96px;font-size:7.90px;color:#000;transform:scaleX(0.8817);">Connection</div>
<div class="a" style="left:485.4px;top:325px;width:165.6px;height:1.6px;background:#f4f6fb;"></div>
<div class="a" style="left:27px;top:329.8px;width:625.8px;height:135px;border-radius:4px;background:#fff;box-shadow:0 0 0 0.6px #d3dbec;"></div>
<svg style="left:27.00px;top:329.80px" width="68.00" height="16.00" viewBox="0 0 68 16"><path d="M0.3 16 V4 Q0.3 0.3 4 0.3 H55 Q59 0.6 60.2 4 L62.6 12 Q63.6 15.4 66.6 15.8" fill="none" stroke="#d5dced" stroke-width="0.7"/></svg>
<svg style="left:29.60px;top:333.60px" width="9.00" height="8.60" viewBox="0 0 9 8.6"><rect x="0.5" y="0.5" width="8" height="7.4" fill="#fff" stroke="#6d7f9c" stroke-width="0.9"/><rect x="0.5" y="0.5" width="8" height="1.8" fill="#6f8fc4"/><path d="M3 2.4 V7.8" stroke="#8fa0ba" stroke-width="0.7"/></svg>
<div class="t" id="t37" style="left:42.50px;top:333.50px;font-size:7.80px;color:#000;transform:scaleX(0.8918);">Properties</div>
<svg style="left:79.20px;top:335.40px" width="6.40" height="6.00" viewBox="0 0 6.4 6"><path d="M0.6 0.5 H2.2 L3.2 1.9 L4.2 0.5 H5.8 L4.2 3 L5.8 5.5 H4.2 L3.2 4.1 L2.2 5.5 H0.6 L2.2 3Z" fill="#fff" stroke="#5a5a5a" stroke-width="0.6"/></svg>
<svg style="left:589.00px;top:333.60px" width="10.60" height="9.20" viewBox="0 0 10.6 9.2"><rect x="0.5" y="2" width="8" height="6.6" fill="#fdfdfd" stroke="#c9b87a" stroke-width="0.8"/><rect x="0.5" y="2" width="8" height="1.6" fill="#5d8fd6"/><path d="M5.4 4.6 L8.6 1 M7 0.2 L10.2 2.6 L8.6 4.2 L6.2 2Z" fill="#3c9a3c" stroke="#2a7a2a" stroke-width="0.8"/></svg>
<svg style="left:610.00px;top:334.40px" width="6.40" height="3.60" viewBox="0 0 6.4 3.6"><path d="M0.5 0.5 H5.9 L3.2 3.2Z" fill="#fff" stroke="#444" stroke-width="0.8"/></svg>
<svg style="left:622.30px;top:334.60px" width="6.80" height="3.20" viewBox="0 0 6.8 3.2"><rect x="0.5" y="0.5" width="5.8" height="2.2" rx="0.7" fill="#fff" stroke="#6e6e6e" stroke-width="0.8"/></svg>
<svg style="left:636.90px;top:334.30px" width="6.80" height="7.20" viewBox="0 0 6.8 7.2"><rect x="0.5" y="0.5" width="5.6" height="6.2" rx="0.5" fill="#fff" stroke="#4e4e4e" stroke-width="0.8"/><rect x="0.3" y="0.2" width="6" height="1.8" fill="#4e4e4e"/></svg>
<div class="a" style="left:28.8px;top:347.3px;width:67.2px;height:116.4px;background:#d4d0c8;"></div>
<div class="a" style="left:95.2px;top:347.3px;width:0.9px;height:116.4px;background:#b7b3ab;"></div>
<div class="a" style="left:28.8px;top:347.3px;width:66.4px;height:6.2px;box-sizing:border-box;border-bottom:0.9px solid #a9a69d;background:linear-gradient(180deg,#e0ddd6,#c6c3ba);"></div>
<div class="a" style="left:28.8px;top:353.5px;width:67.3px;height:11.4px;background:#fff;"></div>
<div class="t" id="t38" style="left:32.80px;top:354.56px;font-size:7.90px;color:#000;font-weight:bold;transform:scaleX(0.9595);">General</div>
<div class="a" style="left:28.8px;top:364.9px;width:66.4px;height:11.8px;box-sizing:border-box;border-top:0.8px solid #a9a69d;border-bottom:0.9px solid #a9a69d;background:linear-gradient(180deg,#d8d5ce 0%,#cfccc4 50%,#bebbb2 100%);"></div>
<div class="t" id="t39" style="left:33.00px;top:366.40px;font-size:7.80px;color:#000;transform:scaleX(0.9078);">Main config</div>
<div class="a" style="left:28.8px;top:377.4px;width:66.4px;height:11.6px;box-sizing:border-box;border-bottom:0.9px solid #a9a69d;background:linear-gradient(180deg,#d8d5ce 0%,#cfccc4 50%,#bebbb2 100%);"></div>
<div class="t" id="t40" style="left:33.00px;top:378.40px;font-size:7.80px;color:#000;transform:scaleX(0.8960);">Documentation</div>
<div class="t" id="t41" style="left:101.80px;top:352.90px;font-size:7.80px;color:#000;transform:scaleX(0.7367);">Id</div>
<div class="t" id="t42" style="left:101.80px;top:367.20px;font-size:7.80px;color:#000;transform:scaleX(0.8553);">Name</div>
<div class="fld" style="top:351.8px;height:9.6px;"></div>
<div class="t" id="t43" style="left:225.90px;top:351.60px;font-size:7.50px;color:#8c8c8c;transform:scaleX(0.9442);">messageintermediatecatchevent1</div>
<div class="fld" style="top:365.2px;height:10.3px;"></div>
<div class="t" id="t44" style="left:225.90px;top:365.33px;font-size:7.70px;color:#000;transform:scaleX(0.9064);">MessageCatchEvent</div>
<div class="dots" style="left:498.8px;top:470.8px;height:10px;background:repeating-linear-gradient(180deg,#aaa490 0,#aaa490 1.1px,transparent 1.1px,transparent 2.9px);"></div>
</body>
</html>
